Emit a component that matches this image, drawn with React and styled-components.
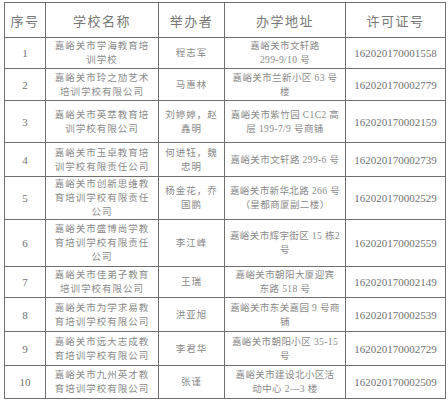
import React from "react";
import styled, { createGlobalStyle } from "styled-components";

const GlobalStyle = createGlobalStyle`
  html, body {
    margin: 0;
    padding: 0;
    background: #ffffff;
  }
  body {
    font-family: "Liberation Serif", "Noto Sans CJK SC", serif;
  }
`;

const rows = [
  { no: "1", name: ["嘉峪关市学海教育培", "训学校"], owner: ["程志军"], addr: ["嘉峪关市文轩路", "299-9/10 号"], lic: "162020170001558", h: 31 },
  { no: "2", name: ["嘉峪关市玲之劢艺术", "培训学校有限公司"], owner: ["马惠林"], addr: ["嘉峪关市兰新小区 63 号", "楼"], lic: "162020170002779", h: 32 },
  { no: "3", name: ["嘉峪关市英萃教育培", "训学校有限公司"], owner: ["刘婷婷，赵", "鑫明"], addr: ["嘉峪关市紫竹园 C1C2 高", "层 199-7/9 号商铺"], lic: "162020170002159", h: 42 },
  { no: "4", name: ["嘉峪关市玉卓教育培", "训学校有限责任公司"], owner: ["何进钰，魏", "忠明"], addr: ["嘉峪关市文轩路 299-6 号"], lic: "162020170002739", h: 34 },
  { no: "5", name: ["嘉峪关市创新思维教", "育培训学校有限责任", "公司"], owner: ["杨金花，乔", "国鹏"], addr: ["嘉峪关市新华北路 266 号", "（皇都商厦副二楼）"], lic: "162020170002529", h: 43 },
  { no: "6", name: ["嘉峪关市盛博尚学教", "育培训学校有限责任", "公司"], owner: ["李江峰"], addr: ["嘉峪关市辉宇街区 15 栋2", "号"], lic: "162020170002559", h: 47 },
  { no: "7", name: ["嘉峪关市佳弟子教育", "培训学校有限公司"], owner: ["王瑞"], addr: ["嘉峪关市朝阳大厦迎宾", "东路 518 号"], lic: "162020170002149", h: 31 },
  { no: "8", name: ["嘉峪关市为学求易教", "育培训学校有限公司"], owner: ["洪亚旭"], addr: ["嘉峪关市东关嘉园 9 号商", "铺"], lic: "162020170002539", h: 34 },
  { no: "9", name: ["嘉峪关市远大志成教", "育培训学校有限公司"], owner: ["李君华"], addr: ["嘉峪关市朝阳小区 35-15", "号"], lic: "162020170002729", h: 34 },
  { no: "10", name: ["嘉峪关市九州英才教", "育培训学校有限公司"], owner: ["张谨"], addr: ["嘉峪关市建设北小区活", "动中心 2—3 楼"], lic: "162020170002509", h: 33 },
];

function App() {
  return (
    <>
      <GlobalStyle />
      <Page>
        <Table>
          <colgroup>
            <col style={{ width: 41 }} />
            <col style={{ width: 113 }} />
            <col style={{ width: 66 }} />
            <col style={{ width: 121 }} />
            <col style={{ width: 100 }} />
          </colgroup>
          <thead>
            <tr>
              <Head>序号</Head>
              <Head>学校名称</Head>
              <Head>举办者</Head>
              <Head>办学地址</Head>
              <Head>许可证号</Head>
            </tr>
          </thead>
          <tbody>
            {rows.map((r) => (
              <Row key={r.no} $h={r.h}>
                <NumCell>{r.no}</NumCell>
                <TextCell>
                  {r.name.map((l, i) => (
                    <Line key={i}>{l}</Line>
                  ))}
                </TextCell>
                <TextCell>
                  {r.owner.map((l, i) => (
                    <Line key={i}>{l}</Line>
                  ))}
                </TextCell>
                <TextCell $tight>
                  {r.addr.map((l, i) => (
                    <Line key={i}>{l}</Line>
                  ))}
                </TextCell>
                <NumCell>{r.lic}</NumCell>
              </Row>
            ))}
          </tbody>
        </Table>
      </Page>
    </>
  );
}

const Page = styled.div`
  width: 448px;
  height: 400px;
  padding: 2px 0 0 4px;
  box-sizing: border-box;
  overflow: hidden;
`;

const Table = styled.table`
  border-collapse: collapse;
  table-layout: fixed;
  width: 441px;
  color: #7a7a7a;
`;

const Head = styled.th`
  height: 34px;
  padding: 0;
  border: 1px solid #707070;
  font-family: "Noto Sans CJK SC", sans-serif;
  font-weight: 400;
  font-size: 13px;
  letter-spacing: 1.5px;
  color: #777777;
  text-align: center;
`;

const Row = styled.tr`
  height: ${(p) => p.$h}px;
`;

const Cell = styled.td`
  padding: 0;
  border: 1px solid #707070;
  text-align: center;
  vertical-align: middle;
`;

const NumCell = styled(Cell)`
  font-family: "Liberation Serif", serif;
  font-size: 11px;
  color: #737373;
`;

const TextCell = styled(Cell)`
  font-family: "Liberation Serif", "Noto Sans CJK SC", serif;
  font-size: 9.5px;
  letter-spacing: ${(p) => (p.$tight ? "0.4px" : "1px")};
  line-height: 14px;
  color: #8a8a8a;
  white-space: nowrap;
`;

const Line = styled.div`
  display: block;
`;

export default App;
